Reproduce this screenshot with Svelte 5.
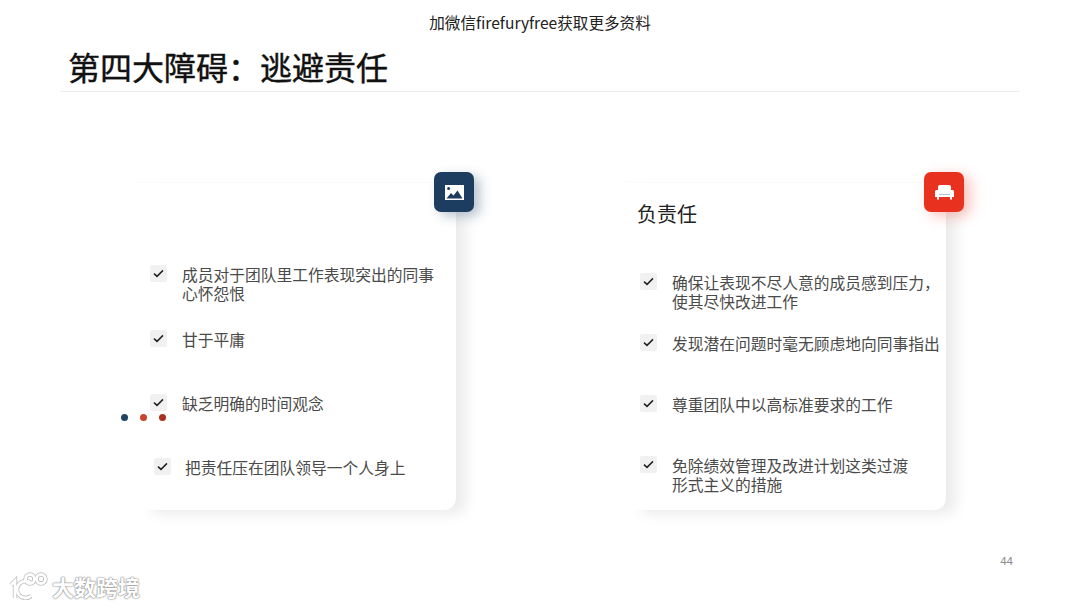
<script>
  const blockers = [
    { lines: ["成员对于团队里工作表现突出的同事", "心怀怨恨"], gap: 0 },
    { lines: ["甘于平庸"], gap: 27 },
    { lines: ["缺乏明确的时间观念"], gap: 45 },
    { lines: ["把责任压在团队领导一个人身上"], gap: 45, nudge: true },
  ];
  const duties = [
    { lines: ["确保让表现不尽人意的成员感到压力\uFF0C", "使其尽快改进工作"], gap: 0 },
    { lines: ["发现潜在问题时毫无顾虑地向同事指出"], gap: 23 },
    { lines: ["尊重团队中以高标准要求的工作"], gap: 42 },
    { lines: ["免除绩效管理及改进计划这类过渡", "形式主义的措施"], gap: 42 },
  ];
</script>

{#snippet checklist(items)}
  <ul class="list">
    {#each items as item}
      <li class="item" class:nudge={item.nudge} style="margin-top: {item.gap}px">
        <span class="check">
          <svg width="11" height="9" viewBox="0 0 11 9">
            <path d="M1 4.6 L4 7.4 L10 1.4" fill="none" stroke="#222" stroke-width="1.5" />
          </svg>
        </span>
        <span class="text">
          {#each item.lines as line}
            <span class="line">{line}</span>
          {/each}
        </span>
      </li>
    {/each}
  </ul>
{/snippet}

{#snippet logo(color, width)}
  <g fill="none" stroke={color} stroke-width={width}>
    <path d="M2 13 L6 9 V26" />
    <path d="M22 11 A8.5 8.5 0 1 0 22 24" />
    <circle cx="21" cy="7" r="4.5" />
    <circle cx="32" cy="7" r="4.5" />
  </g>
{/snippet}

<div class="slide">
  <div class="notice">加微信firefuryfree获取更多资料</div>
  <h1 class="title">第四大障碍&#xFF1A;逃避责任</h1>

  <div class="cards">
    <section class="card left">
      <div class="badge navy">
        <svg width="19" height="15" viewBox="0 0 19 15">
          <path fill="#fff" d="M0 0 H19 V15 H0 Z" />
          <circle cx="3.6" cy="3.6" r="1.5" fill="#1c3d5f" />
          <path fill="#1c3d5f" d="M1.5 13.5 L6 8 L8.5 10.5 L12.5 5.5 L17.5 13.5 Z" />
        </svg>
      </div>
      {@render checklist(blockers)}
    </section>

    <section class="card right">
      <div class="badge red">
        <svg width="19" height="15" viewBox="0 0 19 15">
          <path fill="#fff" d="M3 2 Q3 0 5 0 H14 Q16 0 16 2 V5 H17.5 Q19 5 19 6.5 V12 H17 V14.5 H15 V12 H4 V14.5 H2 V12 H0 V6.5 Q0 5 1.5 5 H3 Z" />
          <path d="M4 9.5 H15" stroke="#9fb4c8" stroke-width="0.8" />
        </svg>
      </div>
      <h2 class="heading">负责任</h2>
      {@render checklist(duties)}
    </section>
  </div>

  <div class="page">44</div>

  <div class="dots">
    <span class="dot d1"></span>
    <span class="dot d2"></span>
    <span class="dot d3"></span>
  </div>

  <div class="mark">
    <svg width="40" height="28" viewBox="0 0 40 28">
      {@render logo("#bdbdbd", 4.4)}
      {@render logo("#fff", 2.8)}
    </svg>
    <span class="mark-text">大数跨境</span>
  </div>
</div>

<style>
  :global(body) {
    margin: 0;
    background: #fff;
  }

  .slide {
    position: relative;
    width: 1080px;
    height: 607px;
    overflow: hidden;
    background: #fff;
    font-family: "Noto Sans CJK SC", "Liberation Sans", sans-serif;
    color: #333;
  }

  .notice {
    padding-top: 12px;
    height: 21px;
    line-height: 21px;
    font-size: 15.6px;
    text-align: center;
    color: #222;
  }

  .title {
    margin: 0 60px;
    padding: 9px 0 0 8px;
    height: 49px;
    line-height: 48px;
    font-size: 32px;
    font-weight: 400;
    -webkit-text-stroke: 0.4px #111;
    color: #111;
    border-bottom: 1px solid #ececec;
  }

  .cards {
    display: flex;
    gap: 170px;
    margin-top: 91px;
    padding-left: 136px;
  }

  .card {
    position: relative;
    box-sizing: border-box;
    width: 320px;
    height: 327px;
    padding-left: 14px;
    border-radius: 0 12px 12px 0;
    background: #fff;
    box-shadow: 13px 7px 14px -3px rgba(0, 0, 0, 0.08), 0 -1px 2px rgba(0, 0, 0, 0.025);
  }

  .left {
    padding-top: 82px;
  }

  .right {
    padding-top: 18px;
  }

  .badge {
    position: absolute;
    top: -11px;
    right: -18px;
    width: 40px;
    height: 40px;
    display: flex;
    align-items: center;
    justify-content: center;
    border-radius: 7px;
  }

  .navy {
    background: #1c3d5f;
    box-shadow: 6px 4px 12px rgba(28, 61, 95, 0.3);
  }

  .red {
    background: #e8321f;
    box-shadow: 6px 4px 14px rgba(232, 50, 31, 0.3);
  }

  .heading {
    margin: 0 0 0 -3px;
    height: 26px;
    line-height: 26px;
    padding-bottom: 46px;
    font-size: 20px;
    font-weight: 400;
    color: #222;
  }

  .list {
    margin: 0;
    padding: 0;
    list-style: none;
  }

  .item {
    display: flex;
    gap: 15px;
    font-size: 15.75px;
    line-height: 19px;
    color: #4a4a4a;
  }

  .nudge {
    margin-left: 4px;
    gap: 14px;
  }

  .check {
    flex: none;
    width: 17px;
    height: 17px;
    display: flex;
    align-items: center;
    justify-content: center;
    background: #f1f1f1;
    border-radius: 2px;
  }

  .text {
    white-space: nowrap;
  }

  .line {
    display: block;
  }

  .page {
    position: absolute;
    right: 67px;
    bottom: 40px;
    font-family: "Liberation Sans", sans-serif;
    font-size: 11.5px;
    color: #8a8a8a;
  }

  .dots {
    position: absolute;
    left: 121px;
    top: 414px;
    display: flex;
    gap: 12px;
  }

  .dot {
    width: 7px;
    height: 7px;
    border-radius: 50%;
  }

  .d1 {
    background: #1f4464;
  }

  .d2 {
    background: #c9432f;
  }

  .d3 {
    background: #a8321f;
  }

  .mark {
    position: absolute;
    left: 9px;
    top: 572px;
    display: flex;
    align-items: center;
    gap: 3px;
  }

  .mark-text {
    font-size: 22px;
    line-height: 28px;
    font-weight: 700;
    color: #fff;
    text-shadow: 0 0 2px #777, 0 0 1px #777;
  }
</style>
